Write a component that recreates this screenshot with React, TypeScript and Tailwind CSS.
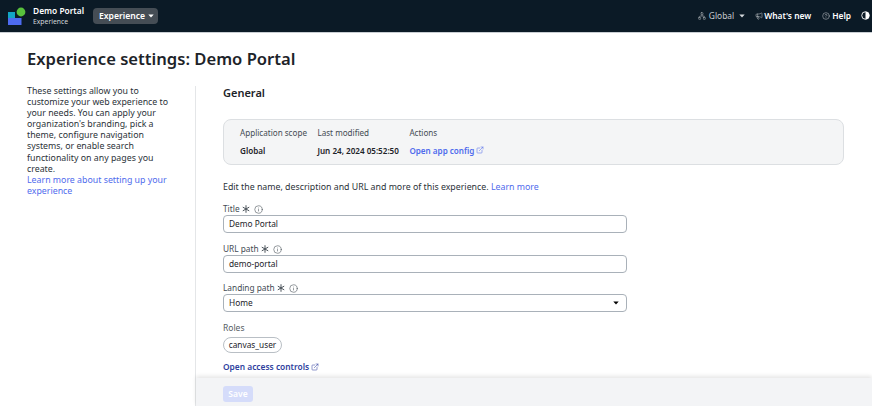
import { CircleHelp, ExternalLink, Info, Megaphone, Network } from "lucide-react";

function Caret({ className = "" }: { className?: string }) {
  return (
    <svg viewBox="0 0 10 6" className={className} fill="currentColor">
      <path d="M0.5 0.5h9L5 5.5z" />
    </svg>
  );
}

function Asterisk() {
  return (
    <svg viewBox="0 0 10 10" className="h-[8px] w-[8px]" stroke="currentColor" strokeWidth="1.2" strokeLinecap="round">
      <path d="M5 .8v8.4M1.4 2.9l7.2 4.2M8.6 2.9l-7.2 4.2" />
    </svg>
  );
}

function FieldLabel({ text }: { text: string }) {
  return (
    <div className="flex h-[12px] items-center gap-[2px] text-[8.3px] text-[#444c54]">
      <span>{text}</span>
      <Asterisk />
      <Info className="ml-[2px] h-[9px] w-[9px]" strokeWidth={1.5} />
    </div>
  );
}

export default function App() {
  return (
    <div className="flex h-[406px] w-[872px] flex-col overflow-hidden bg-white font-['Noto_Sans',sans-serif] text-[#1d2329]">
      <header className="flex h-[33px] shrink-0 items-center justify-between border-b border-[#c9ced3] bg-[#0b1a26] text-white">
        <div className="flex items-center">
          <svg viewBox="0 0 19 19" className="ml-[7px] h-[19px] w-[19px]">
            <rect x="1" y="5" width="7" height="7" fill="#12a5c4" />
            <rect x="1" y="11" width="13.5" height="7" fill="#4d6bf0" />
            <circle cx="14" cy="5" r="4.4" fill="#58c13c" />
          </svg>
          <div className="ml-[7px] flex w-[60px] flex-col">
            <span className="text-[8.4px] leading-[12px] font-semibold">Demo Portal</span>
            <span className="text-[6.8px] leading-[10px] text-[#d5d9dc]">Experience</span>
          </div>
          <div className="flex h-[16.5px] w-[65px] items-center gap-[3px] rounded-[4px] bg-[#454d55] pl-[6px] text-[8.6px] font-semibold">
            Experience
            <Caret className="h-[4px] w-[6px]" />
          </div>
        </div>
        <div className="flex items-center text-[8.4px]">
          <Network className="h-[8px] w-[8px] text-[#b9bec3]" strokeWidth={1.5} />
          <span className="ml-[3px] text-[#c8ccd0]">Global</span>
          <Caret className="ml-[5px] h-[4px] w-[6px] text-[#d5d9dc]" />
          <Megaphone className="ml-[10px] h-[8px] w-[8px] text-[#c8ccd0]" strokeWidth={1.5} />
          <span className="ml-[1px] font-semibold">What's new</span>
          <CircleHelp className="ml-[11px] h-[8px] w-[8px] text-[#c8ccd0]" strokeWidth={1.5} />
          <span className="ml-[2px] font-semibold">Help</span>
          <svg viewBox="0 0 10 10" className="mr-[2px] ml-[10px] h-[9px] w-[9px]">
            <circle cx="5" cy="5" r="4.2" fill="none" stroke="white" strokeWidth="1" />
            <path d="M5 .8a4.2 4.2 0 0 1 0 8.4z" fill="white" />
          </svg>
        </div>
      </header>

      <h1 className="mt-[15px] ml-[27px] h-[22px] shrink-0 text-[16.6px] leading-[22px] font-semibold">
        Experience settings: Demo Portal
      </h1>

      <div className="mt-[16px] flex min-h-0 flex-1">
        <aside className="w-[195px] shrink-0 pl-[27px] text-[8.8px] leading-[11.1px] text-[#2b3238]">
          <p className="w-[145px]">
            These settings allow you to customize your web experience to your needs. You can apply your organization's
            branding, pick a theme, configure navigation systems, or enable search functionality on any pages you
            create.
            <br />
            <span className="text-[#4f6bed]">Learn more about setting up your experience</span>
          </p>
        </aside>
        <div className="w-px shrink-0 bg-[#e4e6e8]" />
        <div className="flex min-w-0 flex-1 flex-col">
          <main className="min-h-0 flex-1 pr-[28px] pl-[27px]">
            <h2 className="h-[14px] text-[11px] leading-[14px] font-semibold">General</h2>

            <div className="mt-[19px] flex h-[46px] items-center gap-[10.5px] rounded-[8px] border border-[#dcdfe2] bg-[#f4f5f6] pb-[2px] pl-[16px] text-[8.1px]">
              <div className="flex flex-col gap-[7px]">
                <span className="leading-[11px] text-[#444c54]">Application scope</span>
                <span className="leading-[11px] font-semibold">Global</span>
              </div>
              <div className="flex flex-col gap-[7px]">
                <span className="leading-[11px] text-[#444c54]">Last modified</span>
                <span className="leading-[11px] font-semibold">Jun 24, 2024 05:52:50</span>
              </div>
              <div className="flex flex-col gap-[7px]">
                <span className="leading-[11px] text-[#444c54]">Actions</span>
                <span className="flex items-center gap-[2px] leading-[11px] font-semibold text-[#4f6bed]">
                  Open app config
                  <ExternalLink className="h-[8px] w-[8px]" strokeWidth={1.6} />
                </span>
              </div>
            </div>

            <p className="mt-[16px] h-[13px] text-[8.8px] leading-[13px] text-[#2b3238]">
              Edit the name, description and URL and more of this experience.{" "}
              <span className="text-[#4f6bed]">Learn more</span>
            </p>

            <div className="mt-[9px] flex w-[404px] flex-col">
              <FieldLabel text="Title" />
              <div className="flex h-[18px] items-center rounded-[4px] border-[1.5px] border-[#a9b1b9] px-[5px] text-[8.3px]">
                Demo Portal
              </div>
              <div className="mt-[10px]">
                <FieldLabel text="URL path" />
              </div>
              <div className="flex h-[18px] items-center rounded-[4px] border-[1.5px] border-[#a9b1b9] px-[5px] text-[8.3px]">
                demo-portal
              </div>
              <div className="mt-[9px]">
                <FieldLabel text="Landing path" />
              </div>
              <div className="flex h-[18px] items-center justify-between rounded-[4px] border-[1.5px] border-[#a9b1b9] pr-[7px] pl-[5px] text-[8.3px]">
                Home
                <Caret className="h-[4px] w-[6px] text-black" />
              </div>
              <span className="mt-[9px] h-[13px] text-[8.5px] leading-[13px] text-[#555c63]">Roles</span>
              <div className="mt-[3px] flex h-[16px] w-[59px] items-center justify-center rounded-full border border-[#b9bfc5] text-[8.3px]">
                canvas_user
              </div>
              <span className="mt-[8px] flex items-center gap-[2px] text-[8.4px] leading-[12px] font-semibold text-[#2f3f9e]">
                Open access controls
                <ExternalLink className="h-[8px] w-[8px]" strokeWidth={1.6} />
              </span>
            </div>
          </main>
          <footer className="flex h-[28px] shrink-0 items-center bg-[#f3f4f6] pt-[4px] pl-[27px] shadow-[0_-2px_4px_rgba(0,0,0,0.1)]">
            <div className="flex h-[16px] w-[30px] items-center justify-center rounded-[3px] bg-[#d5dcfa] text-[8.5px] font-semibold text-white">
              Save
            </div>
          </footer>
        </div>
      </div>
    </div>
  );
}
